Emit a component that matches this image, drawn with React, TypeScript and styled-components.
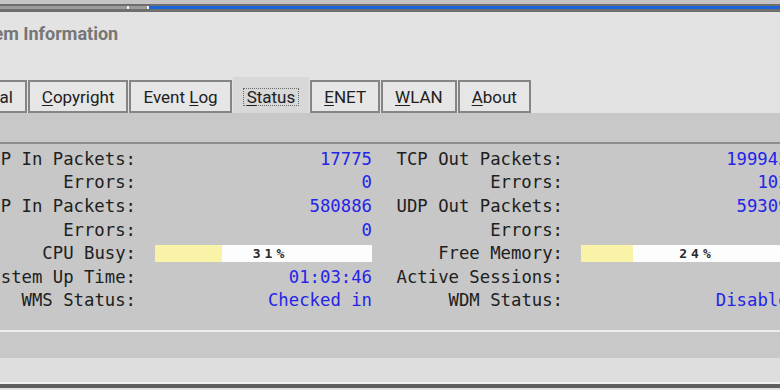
import React from 'react';
import styled, {createGlobalStyle} from 'styled-components';

const GlobalStyle = createGlobalStyle`
    html, body {
        margin:0;
        padding:0;
        background:#e3e3e3;
        overflow:hidden;
    }
`

const Screen = styled.div`
    width:780px;
    height:390px;
    overflow:hidden;
    display:flex;
    flex-direction:column;
    background:#e3e3e3;
`

const TopStrip = styled.div`
    height:12px;
    background:linear-gradient(#c4c4c4 0, #c4c4c4 4px, #6e6e6e 4px, #6e6e6e 12px);
    padding-top:6px;
    box-sizing:border-box;
`

const Track = styled.div`
    display:flex;
    height:3px;
`

const TrackPart = styled.div<{ w?: number, blue?: boolean }>`
    ${p => p.w ? `width:${p.w}px;` : 'flex:1 1;'}
    background:${p => p.blue ? '#1b63d9' : '#9c9c9c'};
`

const Dot = styled.div`
    width:2px;
    background:#f4f4f4;
`

const Header = styled.div`
    height:65px;
    box-sizing:border-box;
    padding-top:11px;
`

const Title = styled.div`
    margin-left:-42px;
    font-family:Roboto, "Liberation Sans", sans-serif;
    font-weight:bold;
    font-size:18px;
    line-height:22px;
    color:#767676;
`

const TabRow = styled.div`
    height:36px;
    display:flex;
    align-items:flex-end;
    gap:1px;
    margin-left:-59px;
`

const Tab = styled.div<{ selected?: boolean }>`
    box-sizing:border-box;
    height:${p => p.selected ? 36 : 33}px;
    padding:0 ${p => p.selected ? 10 : 12}px;
    display:flex;
    align-items:center;
    justify-content:center;
    border:${p => p.selected ? 'none' : '2px solid #858585'};
    background:${p => p.selected ? '#d8d8d8' : '#e6e6e6'};
    font-family:Roboto, "Liberation Sans", sans-serif;
    font-size:17px;
    color:#202020;
    white-space:pre;
    u { text-underline-offset:2px; }
`

const Focus = styled.span`
    border:1px dotted #6a6a6a;
    padding:0 3px;
    line-height:16px;
    margin-top:3px;
`

const Band = styled.div`
    height:29px;
    background:#c8c8c8;
`

const Content = styled.div`
    height:188px;
    box-sizing:border-box;
    background:#c7c7c7;
    border-top:2px solid #8c8c8c;
    padding-top:3px;
`

const Grid = styled.div`
    display:grid;
    grid-template-columns:176px 236px 191px 236px;
    grid-auto-rows:23.6px;
    align-items:center;
    margin-left:-40px;
    font-family:"DejaVu Sans Mono", "Liberation Mono", monospace;
    font-size:17.3px;
    white-space:pre;
`

const Label = styled.div`
    text-align:right;
    color:#202020;
`

const Value = styled.div<{ pad: number }>`
    text-align:right;
    padding-left:${p => p.pad}px;
    color:#2424e8;
`

const BarCell = styled.div<{ pad: number }>`
    padding-left:${p => p.pad}px;
`

const Bar = styled.div`
    position:relative;
    height:17px;
    background:#fdfdfd;
    display:flex;
    align-items:center;
    justify-content:center;
    padding-left:14px;
`

const BarFill = styled.div`
    position:absolute;
    left:0;
    top:0;
    bottom:0;
    background:#f8f3a6;
`

const BarText = styled.span`
    position:relative;
    font-family:"DejaVu Sans Mono", monospace;
    font-size:13px;
    font-weight:bold;
    letter-spacing:4px;
    color:#2a2a2a;
`

const BottomLine = styled.div`
    height:2px;
    background:#eeeeee;
`

const StatusBand = styled.div`
    height:26px;
    background:#c8c8c8;
`

const Footer = styled.div`
    height:24px;
    background:#dedede;
`

const FooterEdge = styled.div`
    height:6px;
    background:linear-gradient(#f2f2f2 0, #f2f2f2 2px, #606060 2px);
`

type Row = { label: string, value?: string, bar?: number }

const left: Row[] = [
    {label: 'TCP In Packets:', value: '17775'},
    {label: 'Errors:', value: '0'},
    {label: 'UDP In Packets:', value: '580886'},
    {label: 'Errors:', value: '0'},
    {label: 'CPU Busy:', bar: 31},
    {label: 'System Up Time:', value: '01:03:46'},
    {label: 'WMS Status:', value: 'Checked in'},
]

const right: Row[] = [
    {label: 'TCP Out Packets:', value: '1999452'},
    {label: 'Errors:', value: '1023'},
    {label: 'UDP Out Packets:', value: '593098'},
    {label: 'Errors:', value: '0'},
    {label: 'Free Memory:', bar: 24},
    {label: 'Active Sessions:', value: '0'},
    {label: 'WDM Status:', value: 'Disabled'},
]

function Cell({row, pad}: { row: Row, pad: number }) {
    if (row.bar !== undefined) {
        return <BarCell pad={pad}>
            <Bar>
                <BarFill style={{width: row.bar + '%'}}/>
                <BarText>{row.bar}%</BarText>
            </Bar>
        </BarCell>
    }
    return <Value pad={pad}>{row.value}</Value>
}

// label text with the mnemonic letter underlined
const tabs = [
    {pre: '', u: 'G', post: 'eneral'},
    {pre: '', u: 'C', post: 'opyright'},
    {pre: 'Event ', u: 'L', post: 'og'},
    {pre: '', u: 'S', post: 'tatus', selected: true},
    {pre: '', u: 'E', post: 'NET'},
    {pre: '', u: 'W', post: 'LAN'},
    {pre: '', u: 'A', post: 'bout'},
]

function App() {
    return (
        <Screen>
            <GlobalStyle/>
            <TopStrip>
                <Track>
                    <TrackPart w={127}/>
                    <Dot/>
                    <TrackPart w={18}/>
                    <Dot/>
                    <TrackPart blue/>
                </Track>
            </TopStrip>
            <Header>
                <Title>System Information</Title>
            </Header>
            <TabRow>
                {tabs.map((t, i) => {
                    const text = <span>{t.pre}<u>{t.u}</u>{t.post}</span>
                    return <Tab key={i} selected={t.selected}>
                        {t.selected ? <Focus>{text}</Focus> : text}
                    </Tab>
                })}
            </TabRow>
            <Band/>
            <Content>
                <Grid>
                    {left.map((row, i) => (
                        <React.Fragment key={i}>
                            <Label>{row.label}</Label>
                            <Cell row={row} pad={19}/>
                            <Label>{right[i].label}</Label>
                            <Cell row={right[i]} pad={18}/>
                        </React.Fragment>
                    ))}
                </Grid>
            </Content>
            <BottomLine/>
            <StatusBand/>
            <Footer/>
            <FooterEdge/>
        </Screen>
    );
}

export default App;
